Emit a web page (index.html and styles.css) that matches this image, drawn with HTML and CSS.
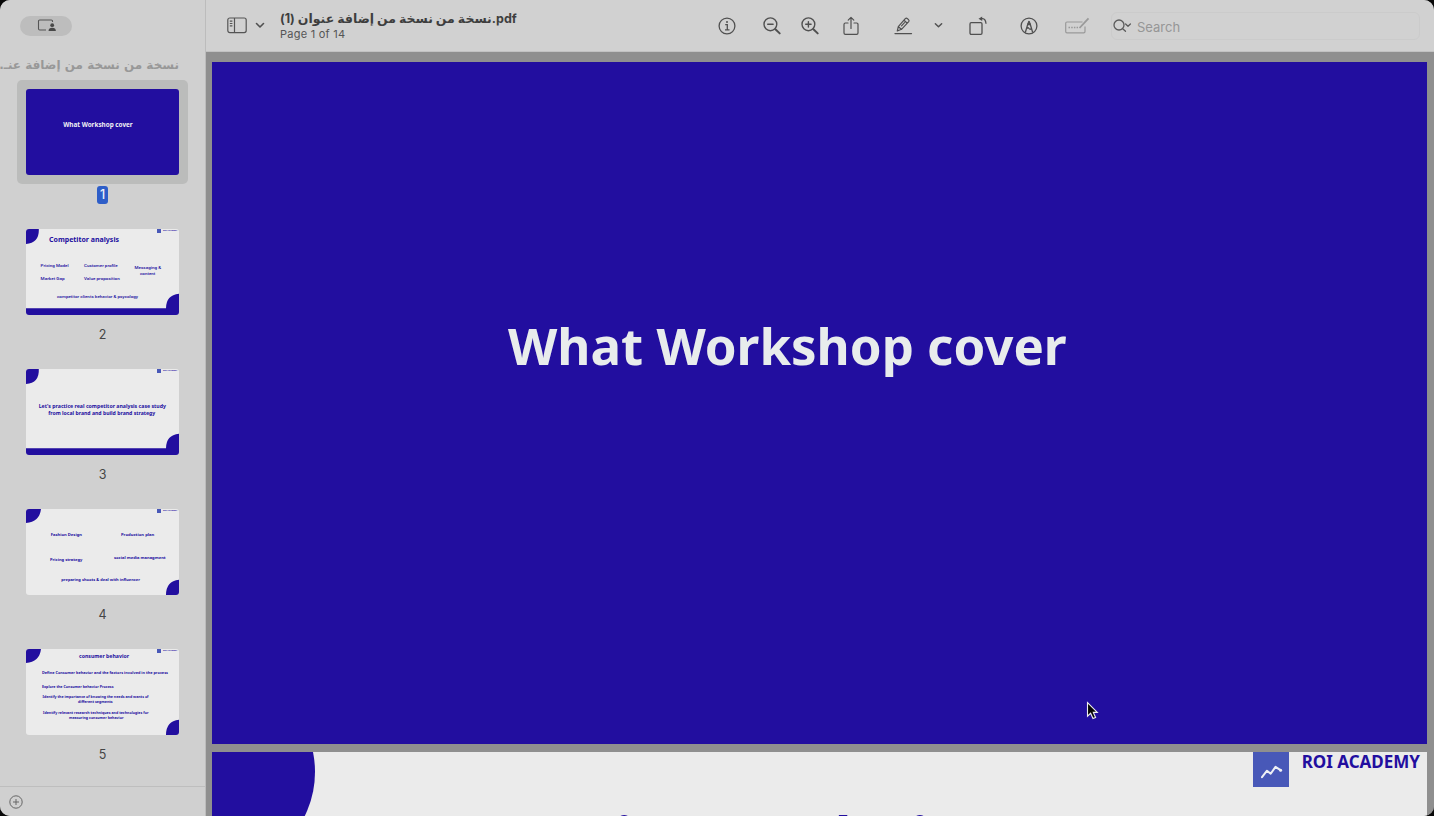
FILE: index.html
```html
<!DOCTYPE html>
<html lang="en">
<head>
<meta charset="utf-8">
<title>Preview</title>
<link rel="stylesheet" href="styles.css">
</head>
<body>
<div class="window">
  <aside class="sidebar">
    <div class="share-pill">
      <svg width="20" height="14" viewBox="0 0 20 14"><path d="M15.5 3V2.2Q15.500 1 14.300 1H2.700Q1.500 1 1.500 2.200V9.800Q1.500 11 2.700 11H9" fill="none" stroke="#555" stroke-width="1.100"/><circle cx="15.200" cy="6.200" r="1.900" fill="#484848"/><path d="M11.500 12Q11.700 8.800 15.200 8.800T18.900 12Z" fill="#484848"/></svg>
    </div>
    <div class="doc-name" dir="rtl">نسخة من نسخة من إضافة عنـ...</div>
    <div class="thumbs">
      <div class="thumb selected">
        <div class="frame"><svg class="slide dark" viewBox="0 0 153 86"><text x="37.200" y="38" font-size="6.400" textLength="69.500" lengthAdjust="spacingAndGlyphs" fill="#f0f0f4">What Workshop cover</text></svg></div>
        <span class="num">1</span>
      </div>
      <div class="thumb">
        <div class="frame"><svg class="slide" viewBox="0 0 153 86">
          <path d="M0 0H12.800Q13.500 14 0 15ZM0 79.300H140Q140 66 153 64.700V86H0Z"/>
          <rect class="mark" x="131" y="0" width="4" height="4"/><text x="137" y="1.900" font-size="2.300" textLength="14.300" lengthAdjust="spacingAndGlyphs">ROI ACADEMY</text>
          <text x="23" y="13" font-size="7" textLength="70" lengthAdjust="spacingAndGlyphs">Competitor analysis</text>
          <g class="sans" font-size="4.300">
          <text x="14.600" y="37.800" textLength="28" lengthAdjust="spacingAndGlyphs">Pricing Model</text>
          <text x="58" y="37.800" textLength="33.700" lengthAdjust="spacingAndGlyphs">Customer profile</text>
          <text x="108.600" y="40" textLength="26.500" lengthAdjust="spacingAndGlyphs">Messaging &amp;</text>
          <text x="114" y="46" textLength="15.300" lengthAdjust="spacingAndGlyphs">content</text>
          <text x="14.600" y="51.300" textLength="24" lengthAdjust="spacingAndGlyphs">Market Gap</text>
          <text x="58" y="51.300" textLength="35.700" lengthAdjust="spacingAndGlyphs">Value proposition</text>
          <text x="31" y="68.700" textLength="81" lengthAdjust="spacingAndGlyphs">competitor clients behavior &amp; psycology</text>
          </g></svg></div>
        <span class="num">2</span>
      </div>
      <div class="thumb">
        <div class="frame"><svg class="slide" viewBox="0 0 153 86">
          <path d="M0 0H12.800Q13.500 14 0 15ZM0 79.300H140Q140 66 153 64.700V86H0Z"/>
          <rect class="mark" x="131" y="0" width="4" height="4"/><text x="137" y="1.900" font-size="2.300" textLength="14.300" lengthAdjust="spacingAndGlyphs">ROI ACADEMY</text>
          <g font-size="5.300"><text x="12.700" y="38.600" textLength="127.300" lengthAdjust="spacingAndGlyphs">Let's practice real competitor analysis case study</text>
          <text x="22.300" y="45.500" textLength="107" lengthAdjust="spacingAndGlyphs">from local brand and build brand strategy</text></g></svg></div>
        <span class="num">3</span>
      </div>
      <div class="thumb">
        <div class="frame"><svg class="slide" viewBox="0 0 153 86">
          <path d="M0 0H15Q13.500 13 0 14ZM140 86Q140 72 153 70.700V86Z"/>
          <rect class="mark" x="131" y="0" width="4" height="4"/><text x="137" y="1.900" font-size="2.300" textLength="14.300" lengthAdjust="spacingAndGlyphs">ROI ACADEMY</text>
          <g font-size="4.200"><text x="24.700" y="27.400" textLength="31.300" lengthAdjust="spacingAndGlyphs">Fashion Design</text>
          <text x="95" y="27.400" textLength="33.300" lengthAdjust="spacingAndGlyphs">Production plan</text>
          <text x="24" y="51.600" textLength="32.300" lengthAdjust="spacingAndGlyphs">Pricing strategy</text>
          <text x="88" y="49.600" textLength="51.600" lengthAdjust="spacingAndGlyphs">social media managment</text>
          <text x="35.300" y="71.900" textLength="78.700" lengthAdjust="spacingAndGlyphs">preparing shoots &amp; deal with influencer</text></g></svg></div>
        <span class="num">4</span>
      </div>
      <div class="thumb">
        <div class="frame"><svg class="slide" viewBox="0 0 153 86">
          <path d="M0 0H15Q13.500 13 0 14ZM140 86Q140 72 153 70.700V86Z"/>
          <rect class="mark" x="131" y="0" width="4" height="4"/><text x="137" y="1.900" font-size="2.300" textLength="14.300" lengthAdjust="spacingAndGlyphs">ROI ACADEMY</text>
          <text x="53" y="9" font-size="5.300" textLength="50" lengthAdjust="spacingAndGlyphs">consumer behavior</text>
          <g font-size="4"><text x="16" y="24.800" textLength="126" lengthAdjust="spacingAndGlyphs">Define Consumer behavior and the factors involved in the process</text>
          <text x="16" y="38.600" textLength="71.500" lengthAdjust="spacingAndGlyphs">Explore the Consumer behavior Process</text>
          <text x="16.500" y="49.200" textLength="106" lengthAdjust="spacingAndGlyphs">Identify the importance of knowing the needs and wants of</text>
          <text x="52" y="54.400" textLength="34.700" lengthAdjust="spacingAndGlyphs">different segments</text>
          <text x="17" y="64.500" textLength="105.500" lengthAdjust="spacingAndGlyphs">Identify relevant research techniques and technologies for</text>
          <text x="43" y="70" textLength="54.500" lengthAdjust="spacingAndGlyphs">measuring consumer behavior</text></g></svg></div>
        <span class="num">5</span>
      </div>
    </div>
    <div class="side-foot">
      <svg width="14" height="14" viewBox="0 0 14 14" fill="none" stroke="#666" stroke-width="1"><circle cx="7" cy="7" r="6.200"/><path d="M7 4V10M4 7H10"/></svg>
    </div>
  </aside>
  <main class="viewer">
    <header class="toolbar">
      <svg class="i-side" width="20" height="17" viewBox="0 0 20 17" fill="none" stroke="#555" stroke-width="1.200"><rect x=".8" y="1" width="18.400" height="14.600" rx="2"/><path d="M7.500 1V15.600M2.800 4.200H5.400M2.800 6.500H5.400M2.800 8.800H5.400"/></svg>
      <svg class="i-chev" width="10" height="7" viewBox="0 0 10 7" fill="none" stroke="#505050" stroke-width="1.600" stroke-linecap="round" stroke-linejoin="round"><path d="M1.500 1.500 5 5 8.500 1.500"/></svg>
      <div class="titles">
        <div class="title">نسخة من نسخة من إضافة عنوان (1).pdf</div>
        <div class="subtitle">Page 1 of 14</div>
      </div>
      <svg class="i-info" width="20" height="20" viewBox="0 0 20 20" fill="none" stroke="#505050" stroke-width="1.300"><circle cx="10" cy="10" r="7.900"/><path d="M8.200 8.600H10.300V13.800M8 13.900H12.500"/><circle cx="10" cy="6.100" r="1" fill="#505050" stroke="none"/></svg>
      <svg class="i-zout" width="20" height="20" viewBox="0 0 20 20" fill="none" stroke="#505050" stroke-width="1.400" stroke-linecap="round"><circle cx="8.400" cy="8.300" r="6.400"/><path d="M5.700 8.300H11.100"/><path d="M13.400 13.300 17.700 17.400" stroke-width="2"/></svg>
      <svg class="i-zin" width="20" height="20" viewBox="0 0 20 20" fill="none" stroke="#505050" stroke-width="1.400" stroke-linecap="round"><circle cx="8.400" cy="8.300" r="6.400"/><path d="M5.700 8.300H11.100M8.400 5.600V11"/><path d="M13.400 13.300 17.700 17.400" stroke-width="2"/></svg>
      <svg class="i-share" width="20" height="20" viewBox="0 0 20 20" fill="none" stroke="#505050" stroke-width="1.200" stroke-linecap="round" stroke-linejoin="round"><path d="M7 7H4.400Q3 7 3 8.400V17Q3 18.400 4.400 18.400H15.600Q17 18.400 17 17V8.400Q17 7 15.600 7H13M10 12.500V1.400M7.200 4.100 10 1.300 12.800 4.100"/></svg>
      <svg class="i-pen" width="20" height="20" viewBox="0 0 20 20" fill="none" stroke="#505050" stroke-width="1.200" stroke-linecap="round" stroke-linejoin="round"><path d="M2 17.600H18.500" stroke-width="1.300"/><path d="M4.300 15 5.300 10.700 12.300 2.600Q13.300 1.700 14.500 2.700L15.500 3.600Q16.600 4.700 15.700 5.700L8.500 13.300ZM5.300 10.700 8.500 13.300M11 4.200 14.200 7.200M8.500 9.800 11.500 6.600"/></svg>
      <svg class="i-chev2" width="9" height="7" viewBox="0 0 10 7" fill="none" stroke="#505050" stroke-width="1.600" stroke-linecap="round" stroke-linejoin="round"><path d="M1.500 1.500 5 5 8.500 1.500"/></svg>
      <svg class="i-rot" width="20" height="20" viewBox="0 0 20 20" fill="none" stroke="#505050" stroke-width="1.300" stroke-linejoin="round"><rect x="2" y="6.700" width="12" height="11.600" rx="1.200"/><path d="M12 2.600H14.600Q17.600 2.800 18 7.800"/><path d="M10.500 2.700 14.200 .5V5Z" fill="#505050" stroke="none"/></svg>
      <svg class="i-mark" width="20" height="20" viewBox="0 0 20 20" fill="none" stroke="#505050" stroke-width="1.300" stroke-linejoin="round"><circle cx="10" cy="10" r="7.900"/><path d="M6.300 16.500 9 7.500 10 5.500 11 7.500 13.700 16.500M7.800 12.500Q9 11 10 12.500T12.300 12.500"/><path d="M10 5.500 11 8.500H9Z" fill="#505050"/></svg>
      <svg class="i-form" width="26" height="20" viewBox="0 0 26 20" fill="none" stroke="#999" stroke-width="1.200" stroke-linejoin="round"><path d="M18.500 6H3Q1.700 6 1.700 7.300V15.600Q1.700 16.900 3 16.900H19.700Q21 16.900 21 15.600V10.500"/><path d="M4.500 11.500H14" stroke-width="1.500" stroke-dasharray="1.500 1.200"/><path d="M15.500 12 24.500 2.400" stroke-width="1.800"/></svg>
      <div class="search">
        <svg width="20" height="16" viewBox="0 0 20 16" fill="none" stroke="#5b5b5b" stroke-width="1.300" stroke-linecap="round" stroke-linejoin="round"><circle cx="7" cy="7" r="5"/><path d="M10.700 10.700 13.500 13.300M13.600 6 16 8.200 18.400 6"/></svg>
        <span>Search</span>
      </div>
    </header>
    <section class="pages">
      <article class="page cover"><h1>What Workshop cover</h1></article>
      <article class="page second">
        <svg class="disc" width="110" height="64" viewBox="0 0 110 64"><circle cx="3.500" cy="20" r="99.500"/></svg>
        <div class="heading">Competitor analysis</div>
        <div class="brand">
          <svg width="36" height="35" viewBox="0 0 36 35"><rect width="36" height="35" fill="#4858b8"/><path d="M9 25.200 14 18.700 17.700 21.700 22.500 14.900 27.500 18.200" fill="none" stroke="#eef0f5" stroke-width="2" stroke-linecap="round" stroke-linejoin="round"/><circle cx="27.600" cy="18.200" r="1.500" fill="#eef0f5"/></svg>
          <span>ROI ACADEMY</span>
        </div>
      </article>
    </section>
  </main>
  <svg class="cursor" width="13" height="20" viewBox="0 0 13 20"><path d="M1.500 1.500V15.200L4.600 12.300 7 17.600 9.600 16.500 7.300 11.400H11.300Z" fill="#050505" stroke="#eee" stroke-width="1.100"/></svg>
</div>
</body>
</html>
```
FILE: styles.css
```css
* { box-sizing: border-box; }
body { margin: 0; background: #080808; font-family: Inter, "DejaVu Sans", sans-serif; }
svg { display: block; flex: none; }
.window { position: relative; display: flex; width: 1434px; height: 816px; border-radius: 10px; overflow: hidden; background: #8f8f8f; }

.sidebar { display: flex; flex-direction: column; width: 206px; padding-top: 16px; background: #d0d0d0; border-right: 1px solid #bcbcbc; }
.share-pill { display: flex; align-items: center; justify-content: center; width: 52px; height: 20px; margin-left: 20px; padding-left: 2px; border-radius: 10px; background: #bdbdbd; }
.doc-name { height: 20px; margin: 19px 26px 5px 15px; font: bold 12px/20px "DejaVu Sans", sans-serif; color: #989898; white-space: nowrap; }
.thumbs { display: flex; flex-direction: column; flex: 1; min-height: 0; padding-left: 17px; }
.thumb { display: flex; flex-direction: column; align-items: center; width: 171px; height: 140px; flex: none; }
.frame { width: 171px; height: 104px; padding: 9px; border-radius: 5px; }
.selected .frame { background: #bbbcbb; }
.slide { width: 153px; height: 86px; border-radius: 3px; background: #ebebeb; fill: #220e9f; font-family: "Noto Sans", sans-serif; font-weight: bold; }
.slide.dark { background: #220e9f; }
.slide .sans { font-family: Roboto, sans-serif; font-weight: 500; }
.slide .mark { fill: #4858b8; }
.num { margin-top: 2px; height: 18px; padding: 0 3px; border-radius: 3px; font-size: 12.500px; line-height: 18px; color: #454545; }
.selected .num { background: #2e5ec8; color: #eef2fa; font-weight: 500; }
.side-foot { display: flex; align-items: center; height: 30px; padding-left: 9px; border-top: 1px solid #bebebe; }

.viewer { display: flex; flex-direction: column; flex: 1; min-width: 0; }
.toolbar { display: flex; align-items: center; height: 52px; padding: 0 14px 0 21px; background: #d1d1d1; border-bottom: 1px solid #c2c2c2; }
.i-chev { margin-left: 8px; }
.titles { width: 224px; margin-left: 15px; white-space: nowrap; }
.title { font: bold 12.500px/18px Inter, "DejaVu Sans", sans-serif; color: #3e3e3e; }
.subtitle { font-size: 11px; line-height: 13px; letter-spacing: .25px; color: #555; }
.i-info { margin-left: 213px; }
.i-zout { margin-left: 25px; }
.i-zin { margin-left: 18px; }
.i-share { margin-left: 21px; }
.i-pen { margin-left: 32px; }
.i-chev2 { margin-left: 21px; }
.i-rot { margin-left: 25px; }
.i-mark { margin-left: 31px; }
.i-form { margin-left: 25px; }
.search { display: flex; align-items: center; gap: 5px; flex: 1; height: 28px; margin-left: 21px; border: 1px solid #cbcbcb; border-radius: 6px; }
.search span { padding-top: 3px; font-size: 13px; color: #969696; }

.pages { display: flex; flex-direction: column; gap: 8px; flex: 1; min-height: 0; padding: 10px 7px 0 6px; background: #8f8f8f; overflow: hidden; }
.page { flex: none; font-family: "Noto Sans", sans-serif; font-weight: bold; overflow: hidden; }
.cover { height: 682px; padding: 248px 0 0 296px; background: #220e9f; }
.cover h1 { margin: 0; font-size: 51px; line-height: 70px; color: #e8ecec; white-space: nowrap; }
.second { display: flex; height: 64px; background: #ebebeb; color: #220e9f; }
.disc { fill: #220e9f; }
.heading { margin: 45px 0 0 75px; font-size: 56px; line-height: 76px; white-space: nowrap; width: 556px; }
.brand { display: flex; gap: 13px; margin-left: auto; padding-right: 7px; }
.brand span { font-size: 17px; line-height: 19px; white-space: nowrap; }
.cursor { position: absolute; left: 1086px; top: 701px; }
```
